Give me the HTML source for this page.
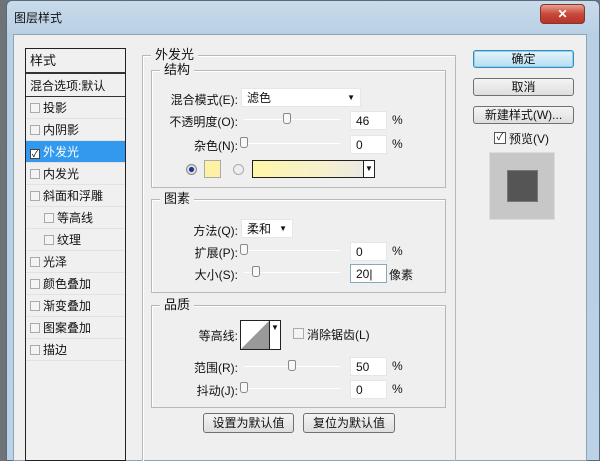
<!DOCTYPE html>
<html><head><meta charset="utf-8"><style>
*{margin:0;padding:0;box-sizing:border-box}
html,body{overflow:hidden}
body{width:600px;height:461px;overflow:hidden;background:#6d7377;font-family:"Liberation Sans","Noto Sans CJK SC",sans-serif;font-size:12px;color:#111;position:relative}
.a{position:absolute}
.win{left:6px;top:0;width:594px;height:461px;background:linear-gradient(#c9dbeb,#b8cfe4 35px,#bcd2e6);border:1px solid #5a6a78;border-radius:6px 6px 0 0}
.client{left:13px;top:34px;width:574px;height:427px;background:#efefef;border:1px solid #8ea3b7}
.list{left:25px;top:48px;width:101px;height:413px;border:1px solid #222;background:#f0f0f0}
.row{position:absolute;left:0;width:99px;height:22px;line-height:22px;padding-left:4px;border-bottom:1px solid #e2e2e2}
.cb{display:inline-block;width:10px;height:10px;border:1px solid #aaa;background:#f4f4f4;vertical-align:-1px;margin-right:3px}
.grp{border:1px solid #b8b8b8;box-shadow:1px 1px 0 #fff inset}
.lg{position:absolute;background:#efefef;padding:0 4px;top:-8px;left:8px;font-size:13px;line-height:14px}
.in{position:absolute;background:#fff;border:1px solid #e6e6e6;height:19px;line-height:18px;padding-left:5px;font-size:12px}
.sl{position:absolute;height:1px;background:#b0b0b0;border-bottom:1px solid #fff}
.th{position:absolute;width:8px;height:11px;border:1px solid #888;background:#f8f8f8;border-radius:2px 2px 3px 3px}
.btn{position:absolute;border:1px solid #707070;border-radius:3px;background:linear-gradient(#f4f4f4,#dedede);text-align:center;line-height:16px;font-size:12px}
.lbl{position:absolute;font-size:12px;text-align:right}
</style></head><body>
<div class="a win"></div>
<div class="a" style="left:14px;top:9px;font-size:12px">图层样式</div>
<div class="a" style="left:540px;top:4px;width:45px;height:20px;border-radius:4px;border:1px solid #7a3a30;background:linear-gradient(#e8a090,#c8483a 50%,#b83428);color:#fff;text-align:center;line-height:18px;font-weight:bold">✕</div>
<div class="a client"></div>
<div class="a list">
<div class="row" style="top:0;height:25px;line-height:24px;border-bottom:2px solid #333;font-size:13px">样式</div>
<div class="row" style="top:26px;border-bottom:1px solid #333">混合选项:默认</div>
<div class="row" style="top:48px"><span class="cb"></span>投影</div>
<div class="row" style="top:70px"><span class="cb"></span>内阴影</div>
<div class="row" style="top:92px;background:#3399ee;color:#fff"><span class="cb" style="background:#fff;border-color:#444;color:#000;font-size:9px;line-height:8px;text-align:center">✓</span>外发光</div>
<div class="row" style="top:114px"><span class="cb"></span>内发光</div>
<div class="row" style="top:136px"><span class="cb"></span>斜面和浮雕</div>
<div class="row" style="top:158px;padding-left:18px"><span class="cb"></span>等高线</div>
<div class="row" style="top:180px;padding-left:18px"><span class="cb"></span>纹理</div>
<div class="row" style="top:202px"><span class="cb"></span>光泽</div>
<div class="row" style="top:224px"><span class="cb"></span>颜色叠加</div>
<div class="row" style="top:246px"><span class="cb"></span>渐变叠加</div>
<div class="row" style="top:268px"><span class="cb"></span>图案叠加</div>
<div class="row" style="top:290px"><span class="cb"></span>描边</div>
</div>

<div class="a grp" style="left:142px;top:55px;width:314px;height:406px;border-bottom:none"><span class="lg">外发光</span></div>
<div class="a grp" style="left:151px;top:70px;width:295px;height:118px"><span class="lg">结构</span></div>
<div class="a grp" style="left:151px;top:199px;width:295px;height:94px"><span class="lg">图素</span></div>
<div class="a grp" style="left:151px;top:305px;width:295px;height:103px"><span class="lg">品质</span></div>

<div class="lbl" style="left:150px;width:88px;top:91px">混合模式(E):</div>
<div class="in" style="left:241px;top:88px;width:120px">滤色<span style="position:absolute;right:5px;font-size:8px">▼</span></div>
<div class="lbl" style="left:150px;width:88px;top:113px">不透明度(O):</div>
<div class="sl" style="left:244px;top:119px;width:96px"></div><div class="th" style="left:283px;top:113px"></div>
<div class="in" style="left:350px;top:111px;width:37px">46</div><div class="a" style="left:392px;top:113px">%</div>
<div class="lbl" style="left:150px;width:88px;top:137px">杂色(N):</div>
<div class="sl" style="left:244px;top:143px;width:96px"></div><div class="th" style="left:240px;top:137px"></div>
<div class="in" style="left:350px;top:135px;width:37px">0</div><div class="a" style="left:392px;top:137px">%</div>
<div class="a" style="left:186px;top:164px;width:11px;height:11px;border-radius:50%;border:1px solid #888;background:radial-gradient(#1a3a80 35%,#dde 45%)"></div>
<div class="a" style="left:204px;top:160px;width:17px;height:18px;background:#fdf1a6;border:1px solid #aaa"></div>
<div class="a" style="left:233px;top:164px;width:11px;height:11px;border-radius:50%;border:1px solid #aaa;background:#eee"></div>
<div class="a" style="left:252px;top:160px;width:123px;height:18px;border:1px solid #222;background:linear-gradient(90deg,#fff6a8,#f6f0d0 60%,#e8e8e8)"><span style="position:absolute;right:0;top:0;width:11px;height:16px;border-left:1px solid #222;background:#fff;font-size:8px;line-height:16px;text-align:center">▼</span></div>

<div class="lbl" style="left:150px;width:88px;top:222px">方法(Q):</div>
<div class="in" style="left:241px;top:219px;width:52px">柔和<span style="position:absolute;right:5px;font-size:8px">▼</span></div>
<div class="lbl" style="left:150px;width:88px;top:244px">扩展(P):</div>
<div class="sl" style="left:244px;top:250px;width:96px"></div><div class="th" style="left:240px;top:244px"></div>
<div class="in" style="left:350px;top:242px;width:37px">0</div><div class="a" style="left:392px;top:244px">%</div>
<div class="lbl" style="left:150px;width:88px;top:266px">大小(S):</div>
<div class="sl" style="left:244px;top:272px;width:96px"></div><div class="th" style="left:252px;top:266px"></div>
<div class="in" style="left:350px;top:264px;width:37px;border-color:#8ab">20|</div><div class="a" style="left:389px;top:266px">像素</div>

<div class="lbl" style="left:150px;width:88px;top:327px">等高线:</div>
<div class="a" style="left:240px;top:320px;width:41px;height:30px;border:1px solid #222;background:#fff"><svg width="29" height="28" style="position:absolute;left:0;top:0"><polygon points="0,28 28,0 28,28" fill="#999"/></svg><span style="position:absolute;right:0;top:0;width:11px;height:28px;border-left:1px solid #222;font-size:8px;line-height:14px;text-align:center">▼</span></div>
<div class="a" style="left:293px;top:328px;width:11px;height:11px;border:1px solid #aaa;background:#f4f4f4"></div>
<div class="a" style="left:307px;top:326px">消除锯齿(L)</div>
<div class="lbl" style="left:150px;width:88px;top:359px">范围(R):</div>
<div class="sl" style="left:244px;top:366px;width:96px"></div><div class="th" style="left:288px;top:360px"></div>
<div class="in" style="left:350px;top:357px;width:37px">50</div><div class="a" style="left:392px;top:359px">%</div>
<div class="lbl" style="left:150px;width:88px;top:382px">抖动(J):</div>
<div class="sl" style="left:244px;top:388px;width:96px"></div><div class="th" style="left:240px;top:382px"></div>
<div class="in" style="left:350px;top:380px;width:37px">0</div><div class="a" style="left:392px;top:382px">%</div>

<div class="btn" style="left:203px;top:413px;width:91px;height:20px;line-height:18px">设置为默认值</div>
<div class="btn" style="left:303px;top:413px;width:92px;height:20px;line-height:18px">复位为默认值</div>

<div class="btn" style="left:473px;top:50px;width:101px;height:18px;border-color:#3b8ab8;background:linear-gradient(#e6f4fb,#b5def3);box-shadow:0 0 0 1px #8fd0ee inset">确定</div>
<div class="btn" style="left:473px;top:78px;width:101px;height:18px">取消</div>
<div class="btn" style="left:473px;top:106px;width:101px;height:18px">新建样式(W)...</div>
<div class="a" style="left:494px;top:132px;width:12px;height:12px;border:1px solid #555;background:#fff;font-size:10px;line-height:10px;text-align:center">✓</div>
<div class="a" style="left:509px;top:130px">预览(V)</div>
<div class="a" style="left:489px;top:152px;width:66px;height:68px;background:#c7c7c7;border:1px solid #ddd"></div>
<div class="a" style="left:507px;top:170px;width:31px;height:32px;background:#555;border:1px solid #777"></div>
</body></html>
